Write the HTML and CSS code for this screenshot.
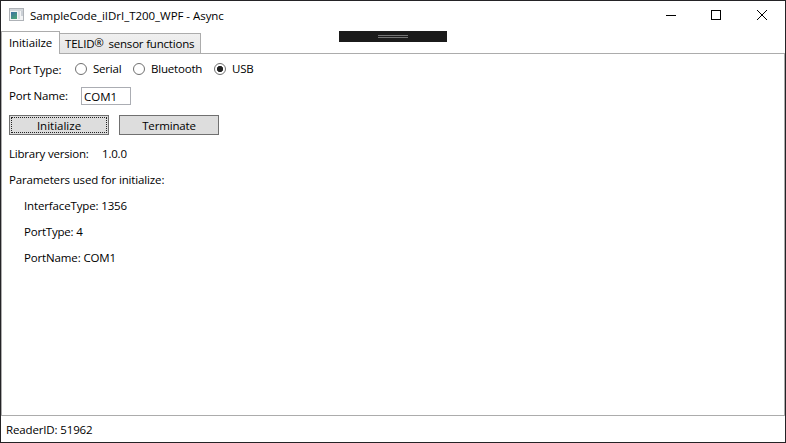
FILE: index.html
```
<!DOCTYPE html>
<html lang="en">
<head>
<meta charset="utf-8">
<title>SampleCode_iIDrI_T200_WPF - Async</title>
<link rel="stylesheet" href="styles.css">
</head>
<body>
<div class="window">
  <header class="titlebar">
    <svg class="app-icon" width="15" height="13" viewBox="0 0 15 13">
      <defs><linearGradient id="pane" x1="0" y1="0" x2="0.6" y2="1"><stop offset="0" stop-color="#3c70a4"/><stop offset="1" stop-color="#48a078"/></linearGradient></defs>
      <rect x="0.5" y="0.5" width="14" height="12" fill="#f3f4f5" stroke="#aeb2b7"/>
      <rect x="1" y="1" width="13" height="2" fill="#d3d7db"/>
      <rect x="2" y="4" width="6" height="7" fill="url(#pane)"/>
      <rect x="9" y="3" width="2" height="8" fill="#dce0e5"/>
      <rect x="12" y="3" width="2" height="5" fill="#cbd0d6"/>
    </svg>
    <h1 class="title">SampleCode_iIDrI_T200_WPF - Async</h1>
    <svg class="controls" width="102" height="12" viewBox="0 0 102 12" fill="none" stroke="#000">
      <path d="M0 5.5h10M45.5 .5h9v9h-9z" shape-rendering="crispEdges"/>
      <path d="M91 0l10 10M101 0l-10 10"/>
    </svg>
  </header>
  <nav class="tabs">
    <div class="tab active"><span>Initiailze</span></div>
    <div class="tab"><span>TELID<span class="mark">®</span> sensor functions</span></div>
  </nav>
  <div class="debug-bar"><i></i></div>
  <main class="panel">
    <div class="row types">
      <span class="label">Port Type:</span>
      <span class="radio"></span><span class="option serial">Serial</span>
      <span class="radio"></span><span class="option bluetooth">Bluetooth</span>
      <span class="radio checked"></span><span class="option">USB</span>
    </div>
    <div class="row name"><span class="label">Port Name:</span><span class="textbox">COM1</span></div>
    <div class="row buttons">
      <button class="focused">Initialize</button>
      <button>Terminate</button>
    </div>
    <div class="row info"><span class="version">Library version:</span><span>1.0.0</span></div>
    <div class="row info wide"><span>Parameters used for initialize:</span></div>
    <div class="row info wide indent"><span>InterfaceType: 1356</span></div>
    <div class="row info indent"><span>PortType: 4</span></div>
    <div class="row info wide indent"><span>PortName: COM1</span></div>
  </main>
  <footer class="status wide"><span>ReaderID: 51962</span></footer>
</div>
</body>
</html>
```
FILE: styles.css
```
* { box-sizing: border-box; }
body { margin: 0; background: #fff; }
.window {
  position: relative; display: flex; flex-direction: column;
  width: 786px; height: 443px; border: 1px solid #242326; background: #fff;
  font: 11.5px/16px "Open Sans", "Noto Sans", sans-serif; color: #000;
  letter-spacing: -0.2px; white-space: nowrap;
}
.titlebar { display: flex; align-items: flex-start; height: 30px; padding: 7px 17px 0 8px; }
.app-icon { width: 15px; }
.title { margin: 0 0 0 6px; font: inherit; letter-spacing: -0.04px; }
.controls { margin: 2px 0 0 auto; }
.tabs { display: flex; align-items: flex-end; height: 23px; margin-bottom: -1px; position: relative; z-index: 1; }
.tab {
  height: 21px; width: 142px; margin-left: -1px; padding: 2px 0 0 5px; border: 1px solid #acacac;
  background: linear-gradient(#f0f0f0, #e5e5e5);
}
.tab.active { width: 59px; height: 23px; margin: 0; padding: 3px 0 0 7px; border-bottom: 0; background: #fff; letter-spacing: -0.1px; }
.mark { margin-right: 2px; position: relative; top: -1px; }
.debug-bar { position: absolute; left: 338px; top: 30px; width: 108px; height: 11px; background: #1b1b1b; z-index: 2; }
.debug-bar i { display: block; width: 30px; height: 3px; margin: 4px 0 0 39px; border: solid #747474; border-width: 1px 0; }
.debug-bar { display: flow-root; }
.panel { height: 363px; border: 1px solid #acacac; padding: 7px 0 0 7px; }
.row { display: flex; align-items: center; }
.types { height: 16px; }
.label { flex: none; }
.types .label { width: 66px; padding-top: 1px; }
.radio { flex: none; width: 12px; height: 12px; border: 1px solid #707070; border-radius: 50%; background: #fff; }
.checked { background: radial-gradient(circle, #212121 0 2.8px, #fff 3.4px); }
.option { margin-left: 6px; flex: none; }
.serial { width: 40px; }
.bluetooth { width: 63px; }
.name { margin-top: 10px; height: 18px; }
.name .label { width: 72px; }
.textbox { width: 50px; height: 18px; padding: 1px 0 0 2px; border: 1px solid #abadb3; letter-spacing: 0; }
.buttons { gap: 10px; margin: 10px 0 11px; }
button { position: relative; width: 100px; height: 20px; padding: 1px 0 0; border: 1px solid #707070; background: #ddd; color: #000; font: inherit; letter-spacing: -0.15px; }
.focused { letter-spacing: 0; }
.focused::after { content: ""; position: absolute; inset: 1px; border: 1px dotted #222; }
.info { height: 16px; margin-bottom: 10px; }
.version { width: 93px; }
.wide { letter-spacing: -0.14px; }
.indent { padding-left: 15px; }
.status { padding: 6px 0 0 5px; }
```
